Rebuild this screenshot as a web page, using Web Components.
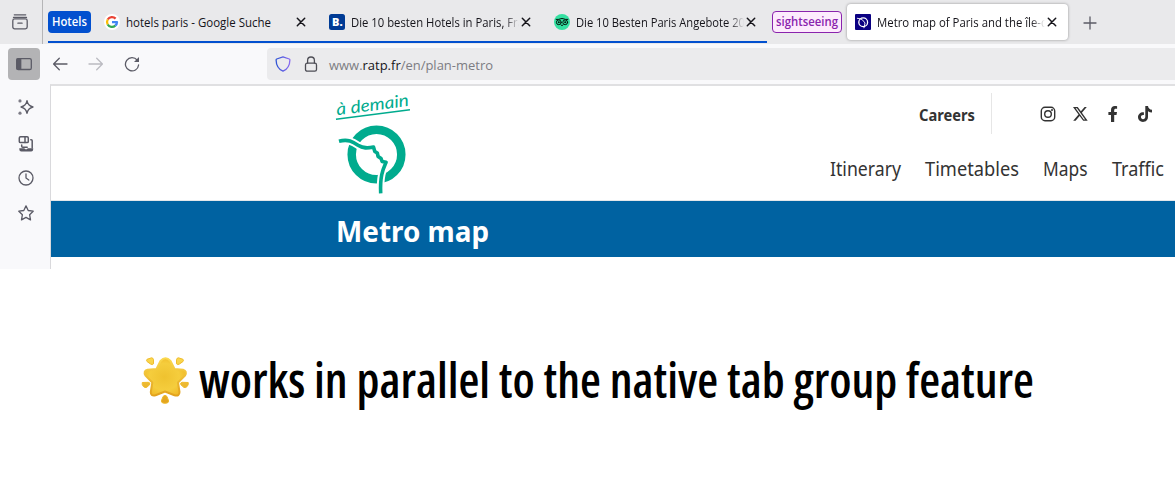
<!DOCTYPE html>
<html lang="en">
<head>
<meta charset="utf-8">
<title>Metro map</title>
<style>
html,body{margin:0;background:#fff;font-family:"Noto Sans","Open Sans",sans-serif}
body{width:1175px;height:500px;overflow:hidden}
</style>
</head>
<body>
<app-page></app-page>
<script>
const define=(name,css,html,after)=>{
  const t=document.createElement('template');
  t.innerHTML='<style>*{box-sizing:border-box}svg{display:block}'+css+'</style>'+html;
  customElements.define(name,class extends HTMLElement{
    constructor(){super();this.attachShadow({mode:'open'}).append(t.content.cloneNode(true));}
    connectedCallback(){if(after)after(this,this.shadowRoot);}
  });
};

/* One line of text fitted to a given width. "|" splits it into parts; the middle part is emphasised. */
define('fit-text',':host{display:block;flex:none;color:inherit}svg{overflow:visible}text{fill:currentColor;white-space:pre}.em{fill:var(--em,currentColor)}','<svg><text lengthAdjust="spacingAndGlyphs"></text></svg>',(el,root)=>{
  const g=(k,d)=>el.getAttribute(k)??d, svg=root.querySelector('svg'), t=root.querySelector('text');
  const w=+g('w'),h=+g('h',20);
  svg.setAttribute('width',w);svg.setAttribute('height',h);
  t.setAttribute('textLength',w);t.setAttribute('y',g('base',h*.75));
  t.style.fontSize=g('size',12)+'px';t.style.fontWeight=g('weight',400);t.style.fontFamily=g('font','"Open Sans"')+',sans-serif';
  t.style.fontStretch=g('stretch','normal');
  g('label','').split('|').forEach((p,i)=>{
    const s=document.createElementNS('http://www.w3.org/2000/svg','tspan');
    s.textContent=p;if(i===1)s.setAttribute('class','em');t.append(s);
  });
});

const icons={
  archive:[16,'<path d="M2.3.8h11.4M1.5 3.4h13M5.9 9.2h4.2"/><rect x=".8" y="4.9" width="14.4" height="10" rx="1.8"/>'],
  sidebar:[16,'<rect x=".7" y="2.7" width="14.6" height="10.8" rx="1.6"/><path d="M1 3h3.700v10H1z" fill="currentColor"/>'],
  back:[16,'<path d="M15 8H1.7M7.3 2.3 1.6 8l5.7 5.7"/>'],
  forward:[16,'<path d="M1 8h13.3M8.7 2.3 14.4 8l-5.7 5.7"/>'],
  reload:[16,'<path d="M13.2 4.2A6.6 6.6 0 1 0 14.6 9"/><path d="M15 1v5H10z" fill="currentColor" stroke="none"/>'],
  lock:[16,'<rect x="2.5" y="7.2" width="11" height="8" rx="1.7"/><path d="M4.6 7V4.4a3.4 3.4 0 0 1 6.8 0V7"/>'],
  shield:[16,'<defs><linearGradient id="g"><stop stop-color="#2f55d4"/><stop offset="1" stop-color="#8a6af0"/></linearGradient></defs><path stroke="url(#g)" d="M8 .8 14.3 3c.5.2.6.5.6.9-.1 5.3-2 9-6.900 11.3C3.100 12.9 1.200 9.200 1.100 3.900c0-.4.1-.7.6-.9z"/>'],
  close:[10,'<path d="m1.300 1.300 7.400 7.400m0-7.400-7.400 7.400" stroke="#15141a" stroke-width="1.500"/>'],
  plus:[14,'<path d="M7 1v12M1 7h12" stroke-width="1.300"/>'],
  sparkle:[16,'<path stroke-width="1.500" d="M9 1.800c.8 3.800 2 5 5.900 6.200-3.900 1.200-5.100 2.400-5.900 6.200-.8-3.800-2-5-5.900-6.200C7 6.800 8.200 5.600 9 1.800z"/><circle cx="2" cy="1.900" r="1.600" fill="#7d7c86" stroke="none"/><circle cx="2" cy="14.200" r="1.600" fill="#7d7c86" stroke="none"/>'],
  devices:[16,'<rect x="1.300" y=".8" width="9" height="5.800" rx="1.200" stroke-width="1.500"/><path stroke-width="1.500" d="M7 .8v5.800M12.800 3.800h.4q1 0 1 1v7M3.700 9v1.300q0 1 1 1h4.500"/><path d="M1.300 12.300h5l1 1h1.500l1-1h5.400v1q0 2.200-2 2.200H3.300q-2 0-2-2.200z" fill="currentColor" stroke="none"/>'],
  clock:[16,'<circle cx="8" cy="8" r="7"/><path d="M8 4v4l2.800 2"/>'],
  star:[16,'<path d="m8 .9 2.200 4.600 5 .7-3.600 3.500.9 5.200L8 12.400l-4.500 2.500.9-5.200L.8 6.200l5-.7z"/>'],
  google:[16,'<circle cx="8" cy="8" r="8" fill="#fff" stroke="none"/><g stroke-width="2.300" stroke-linecap="butt"><path stroke="#ea4335" d="M3.700 5.500A5 5 0 0 1 11.600 4.600"/><path stroke="#fbbc05" d="M3.700 10.500A5 5 0 0 1 3.700 5.500"/><path stroke="#34a853" d="M3.700 10.500a5 5 0 0 0 7.600 1.200"/><path stroke="#4285f4" d="M8 8.100h5a5 5 0 0 1-1.700 3.600"/></g>'],
  booking:[16,'<rect width="16" height="16" rx="2.500" fill="#003b95" stroke="none"/><text x="3" y="12" font-family="Open Sans" font-size="11" font-weight="800" fill="#fff" stroke="none">B.</text>'],
  trip:[16,'<circle cx="8" cy="8" r="8" fill="#34e0a1" stroke="none"/><g stroke="#04180f" stroke-width="1"><path d="M2.200 5.400h2.200q3.600-1.900 7.200 0h2.200M7 10.700l1 1.200 1-1.200"/><circle cx="4.800" cy="8.300" r="2.400"/><circle cx="11.200" cy="8.300" r="2.400"/></g><g fill="#04180f" stroke="none"><circle cx="4.800" cy="8.300" r="1"/><circle cx="11.200" cy="8.300" r="1"/></g>'],
  ratp:[16,'<rect width="16" height="16" rx="1" fill="#0a0082" stroke="none"/><circle cx="8.200" cy="8.300" r="4.400" stroke="#fff" stroke-width="1.300"/><path stroke="#fff" stroke-width=".9" d="m2.300 4.300 3.200.5 2.200 1.300 2.300 2.900-1 4.800"/>'],
  instagram:[16,'<rect x="1.300" y="1.300" width="13.400" height="13.400" rx="3.700" stroke-width="1.400"/><circle cx="8" cy="8" r="3.300" stroke-width="1.400"/><circle cx="12" cy="4" r="1" fill="currentColor" stroke="none"/>'],
  x:[16,'<path fill="currentColor" stroke="none" fill-rule="evenodd" d="M12.600 1h2.200L9.900 6.700 15.700 14.800h-4.500L7.600 10.100l-4 4.700H1.200l5.300-6.200L1 1h4.700l3.200 4.300zM11.800 13.500h1.300L4.900 2.200H3.600z"/>'],
  facebook:[16,'<path fill="currentColor" stroke="none" d="M6 16V9H3.400V6H6V4c0-2.700 1.500-4 3.900-4 1.100 0 2.200.2 2.200.2v2.500h-1.300C9.600 2.700 9.200 3.400 9.200 4.200V6h2.800l-.5 3H9.200v7z"/>'],
  tiktok:[16,'<path fill="currentColor" stroke="none" d="M8.300 0H11c.2 2.100 1.700 3.600 4 3.800v2.700a7 7 0 0 1-4-1.300v5.600C11 14 8.800 16 6 16c-2.900 0-5-2.200-5-4.900 0-3.100 2.700-5.300 5.900-4.900v2.900c-1.700-.4-3 .5-3 2 0 1.200.9 2.100 2.100 2.100 1.400 0 2.300-.9 2.300-2.500z"/>'],
};
define('ui-icon',':host{display:block;flex:none}svg{fill:none;stroke:currentColor;stroke-width:1.300;stroke-linejoin:round;stroke-linecap:round}','<svg></svg>',(el,root)=>{
  const [b,m]=icons[el.getAttribute('name')],s=root.querySelector('svg'),w=el.getAttribute('size')||b;
  s.setAttribute('viewBox',`0 0 ${b} ${b}`);s.setAttribute('width',w);s.setAttribute('height',w);s.innerHTML=m;
});

define('browser-tab',':host{display:flex;flex:none;align-items:center;width:221px;height:36px;padding-left:8px;border-radius:4px;box-sizing:border-box}:host([active]){background:#fff;box-shadow:0 0 3px rgba(0,0,0,.38)}.t{width:168px;margin-left:6px;overflow:hidden;flex:none}:host([fade]) .t{-webkit-mask:linear-gradient(90deg,#000 154px,transparent 168px)}.c{width:14px;display:flex;justify-content:center}','<slot name="icon"></slot><div class="t"><slot></slot></div><div class="c"><ui-icon name="close"></ui-icon></div>');

define('group-chip',':host{display:flex;flex:none;justify-content:center;align-items:center;height:22px;border-radius:4px;box-sizing:border-box}:host([tone=blue]){width:43px;background:#0250cf;color:#fff}:host([tone=purple]){width:70px;background:#fdebfd;color:#8a23ad;border:1px solid #8a23ad}','<slot></slot>');

define('tab-strip',`:host{display:flex;height:44px;background:#e9e9eb;color:#15141a}
.arch{width:43px;border-right:1px solid #b5b5b7;padding:14px 0 0 12px;color:#5b5b66}
.group{display:flex;align-items:center;gap:4px;margin-left:5px;width:719px;height:43px;border-bottom:2px solid #0250cf;padding-top:3px}
.group group-chip{margin-right:1px}
.rest{display:flex;align-items:center;gap:5px;margin-left:5px;height:44px}
.new{margin-left:10px;color:#5b5b66;padding-top:1px}`,
`<div class="arch"><ui-icon name="archive"></ui-icon></div>
<div class="group"><group-chip tone="blue"><fit-text label="Hotels" w="35" h="20" base="14" size="12" weight="600"></fit-text></group-chip>
<browser-tab><ui-icon slot="icon" name="google"></ui-icon><fit-text label="hotels paris - Google Suche" w="145" base="15"></fit-text></browser-tab>
<browser-tab fade><ui-icon slot="icon" name="booking"></ui-icon><fit-text label="Die 10 besten Hotels in Paris, Fra" w="173" base="15"></fit-text></browser-tab>
<browser-tab fade><ui-icon slot="icon" name="trip"></ui-icon><fit-text label="Die 10 Besten Paris Angebote 20" w="169" base="15"></fit-text></browser-tab></div>
<div class="rest"><group-chip tone="purple"><fit-text label="sightseeing" w="62" h="20" base="14" size="12" weight="600"></fit-text></group-chip>
<browser-tab active fade><ui-icon slot="icon" name="ratp"></ui-icon><fit-text label="Metro map of Paris and the île-d" w="171" base="15"></fit-text></browser-tab>
<div class="new"><ui-icon name="plus"></ui-icon></div></div>`);

define('nav-bar',`:host{display:flex;align-items:center;height:40px;background:#f9f9fb;color:#5b5b66;padding-left:8px;box-sizing:border-box}
.s{width:32px;height:32px;border-radius:4px;background:#b3b3b5;display:grid;place-items:center}
.b{margin-left:12px}.f{margin-left:20px;color:#bbbbc1}.r{margin-left:20px}
.url{flex:1;display:flex;align-items:center;height:32px;margin-left:127px;padding-left:8px;background:#ebebed;border-radius:4px 0 0 4px;color:#7c7c82}
.l{margin-left:12px;color:#4d4d55}.u{margin-left:10px;--em:#15141a}`,
`<div class="s"><ui-icon name="sidebar"></ui-icon></div><ui-icon class="b" name="back"></ui-icon><ui-icon class="f" name="forward"></ui-icon><ui-icon class="r" name="reload"></ui-icon>
<div class="url"><ui-icon name="shield"></ui-icon><ui-icon class="l" name="lock"></ui-icon><fit-text class="u" label="www.|ratp.fr|/en/plan-metro" w="164" h="20" base="16" size="13.500"></fit-text></div>`);

define('side-bar',':host{display:flex;flex-direction:column;align-items:center;width:50px;padding:15px 0 0 2px;color:#5b5b66;box-sizing:border-box;background:#f9f9fb}.d{margin-top:21px}.c{margin-top:18px}.s{margin-top:19px}','<ui-icon name="sparkle"></ui-icon><ui-icon class="d" name="devices"></ui-icon><ui-icon class="c" name="clock"></ui-icon><ui-icon class="s" name="star"></ui-icon>');

define('ratp-logo',':host{display:block}svg{overflow:visible}text{font:italic 400 17px "Lato",cursive;fill:#00ab8e}',
`<svg width="80" height="104" viewBox="334 90 80 104" fill="none" stroke="#00ab8e">
<g stroke="none" transform="translate(337 115.300) rotate(-7.500)"><text textLength="73" lengthAdjust="spacingAndGlyphs">à demain</text></g>
<path d="M336 119.200 410 109.700" stroke-width="1.500"/>
<circle cx="376.500" cy="154.500" r="24.800" stroke-width="8.500"/>
<g stroke-linejoin="round"><path stroke="#fff" stroke-width="7.500" d="M339 141.300c9-2.500 14 .5 19 4 5 3.200 9 3 15.500 1.700l1.300 4.500 2.500 1.500.8 3.500 3 2 1 3 4 .8c-2.500 6-6.300 12-5.400 31"/>
<path stroke-width="3.600" d="M339 141.300c9-2.500 14 .5 19 4 5 3.200 9 3 15.500 1.700l1.300 4.500 2.500 1.500.8 3.500 3 2 1 3 4 .8c-2.500 6-6.300 12-5.400 31"/></g></svg>`);

define('site-header',`:host{display:flex;justify-content:space-between;height:115px;background:#fff;color:#333;padding-left:283px;box-sizing:border-box;border-bottom:1px solid #e4e7ea}
ratp-logo{margin-top:4px}.right{width:345px;padding-top:7px}
.top{display:flex;align-items:center;height:41px;margin-left:89px}
.bar{width:1px;height:41px;background:#e6e6e6;margin:0 48px 0 16px}.soc{display:flex;gap:16.400px}
.nav{display:flex;margin-top:22px;gap:24px}`,
`<ratp-logo></ratp-logo><div class="right"><div class="top"><fit-text label="Careers" w="56" h="20" base="17" size="16" weight="700" font="Noto Sans"></fit-text><div class="bar"></div><div class="soc"><ui-icon name="instagram"></ui-icon><ui-icon name="x"></ui-icon><ui-icon name="facebook"></ui-icon><ui-icon name="tiktok"></ui-icon></div></div>
<div class="nav"><fit-text label="Itinerary" w="71" h="26" base="20" size="19" font="Noto Sans"></fit-text><fit-text label="Timetables" w="94" h="26" base="20" size="19" font="Noto Sans"></fit-text><fit-text label="Maps" w="44.500" h="26" base="20" size="19" font="Noto Sans"></fit-text><fit-text label="Traffic" w="52" h="26" base="20" size="19" font="Noto Sans"></fit-text></div></div>`);

define('title-band',':host{display:block;height:56px;background:#0062a1;color:#fff;padding:10px 0 0 285px;box-sizing:border-box}','<fit-text label="Metro map" w="153" h="40" base="31" size="29" weight="700" font="Noto Sans"></fit-text>');

define('browser-window',`:host{display:block;height:269px;overflow:hidden}.body{display:flex;height:185px}.view{flex:1;border-left:1px solid #d9d9dc;border-top:2px solid #e0e0e2;background:#fff}`,
'<tab-strip></tab-strip><nav-bar></nav-bar><div class="body"><side-bar></side-bar><div class="view"><site-header></site-header><title-band></title-band></div></div>');

define('glow-star',':host{display:block;flex:none}',
`<svg width="50" height="48" viewBox="0 0 50 48"><defs><radialGradient id="a" cx=".48" cy=".5" r=".6"><stop stop-color="#efc22f"/><stop offset=".6" stop-color="#f5cd3d"/><stop offset="1" stop-color="#efb523"/></radialGradient><linearGradient id="b" x2="0" y2="1"><stop stop-color="#fbd94e"/><stop offset="1" stop-color="#e2a21d"/></linearGradient></defs>
<path fill="url(#a)" stroke="url(#b)" stroke-width="2" stroke-linejoin="round" d="M19.500 4Q24.500-1.500 29.500 4l4 8 8.500.7q4.500 1.500 2 5.800L37 25.500l1.500 9.500q0 4.500-5 3.300L24 34.500 14.500 38.300q-5 1-4.700-3.300l1.500-9.500L4.500 18.500q-2.500-4.500 2-5.800L15.500 12z"/>
<g fill="url(#b)" stroke="#efbb2c" stroke-width="1" stroke-linejoin="round"><path d="M6 2.300 10.500.8q1.800 0 2 2v4q-1 1.500-3 .2L6 4.500q-1-1 0-2.200zM42 2.300 37.500.8q-1.800 0-2 2v4q1 1.500 3 .2L42 4.500q1-1 0-2.200zM1.300 25.500l6-.2q2.500.5 1.300 2.500L5.500 30.500q-2 .5-3.300-1.200-1.500-2-.9-3.800zM47.200 25.500l-6-.2q-2.500.5-1.300 2.500l3.100 2.700q2 .5 3.300-1.200 1.500-2 .9-3.800zM22 39.500q2-2.500 4 0l1.700 4.500q0 2.300-3.700 2.300T20.300 44z"/></g></svg>`);

define('feature-caption',':host{display:flex;margin-top:88px;padding-left:141px;color:#000}fit-text{margin-left:8px}','<glow-star></glow-star><fit-text label="works in parallel to the native tab group feature" w="835" h="56" base="40.500" size="48" weight="600" stretch="75%" font="Open Sans"></fit-text>');

define('app-page',':host{display:block;width:1175px;height:500px;overflow:hidden}','<browser-window></browser-window><feature-caption></feature-caption>');
</script>
</body>
</html>
